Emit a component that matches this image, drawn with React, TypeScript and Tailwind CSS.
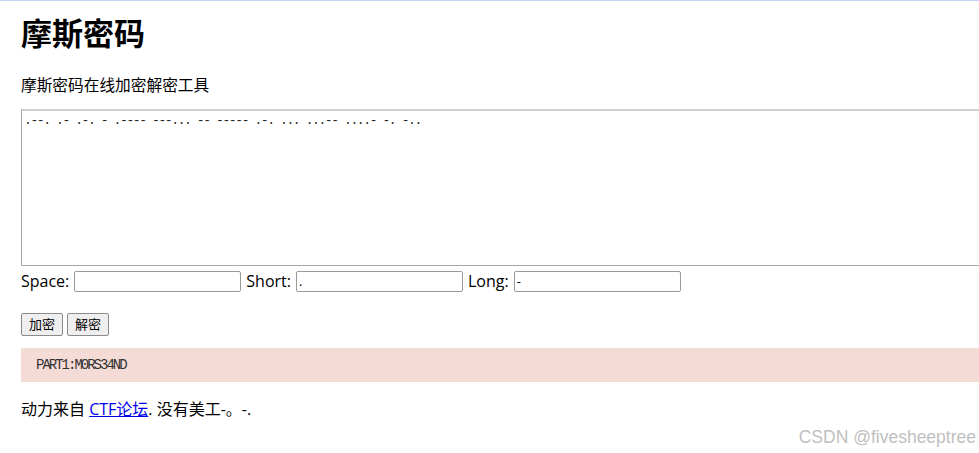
const morse = ".--. .- .-. - .---- ---... -- ----- .-. ... ...-- ....- -. -..";

const App = () => {
  return (
    <div className="relative w-full h-[453px] overflow-hidden bg-white text-black font-['Open_Sans','Noto_Sans_CJK_SC',sans-serif]">
      <div className="h-px w-full bg-[#c3d4fa]" />
      <div className="pl-[21px]">
        {/* TITLE */}
        <h1 className="mt-[14px] text-[31px] leading-[36px] font-bold">摩斯密码</h1>
        <p className="mt-[23px] text-[15.7px] leading-[22px]">摩斯密码在线加密解密工具</p>

        {/* INPUT AREA */}
        <textarea
          readOnly
          defaultValue={morse}
          className="block mt-[13px] w-[1000px] h-[157px] resize-none border border-[#a8a8a8] border-t-[#cfcfcf] border-t-2 px-[2px] py-[2px] text-[13px] leading-[16px] tracking-[-1.4px] text-[#222] font-['Liberation_Mono',monospace] outline-none"
        />

        <div className="mt-[4px] flex items-center gap-[5px] text-[16px] leading-[22px]">
          <span>Space:</span>
          <input className="w-[167px] h-[21px] border border-[#9a9a9a] rounded-[2px] px-[2px] text-[13px]" defaultValue="" />
          <span>Short:</span>
          <input className="w-[167px] h-[21px] border border-[#9a9a9a] rounded-[2px] px-[2px] text-[13px]" defaultValue="." />
          <span>Long:</span>
          <input className="w-[167px] h-[21px] border border-[#9a9a9a] rounded-[2px] px-[2px] text-[13px]" defaultValue="-" />
        </div>

        <div className="mt-[21px] flex gap-[4px]">
          <button className="w-[42px] h-[23px] border border-[#8a8a8a] rounded-[2px] bg-[#efefef] text-[13px] leading-none">加密</button>
          <button className="w-[42px] h-[23px] border border-[#8a8a8a] rounded-[2px] bg-[#efefef] text-[13px] leading-none">解密</button>
        </div>

        {/* RESULT */}
        <div className="mt-[12px] w-[1000px] h-[34px] bg-[#f5dbd6] pl-[15px] flex items-center text-[14px] tracking-[-2px] text-[#333] font-['Liberation_Mono',monospace]">
          PART1:M0RS34ND
        </div>

        <p className="mt-[16px] text-[16px] leading-[22px]">
          动力来自 <a href="#" className="text-[#0000ee] underline">CTF论坛</a>. 没有美工-。-.
        </p>
      </div>

      {/* watermark */}
      <div className="absolute right-[3px] top-[424px] text-[17.5px] text-[#c0c0c0] font-['Liberation_Sans',sans-serif]">
        CSDN @fivesheeptree
      </div>
    </div>
  );
};

export default App;
